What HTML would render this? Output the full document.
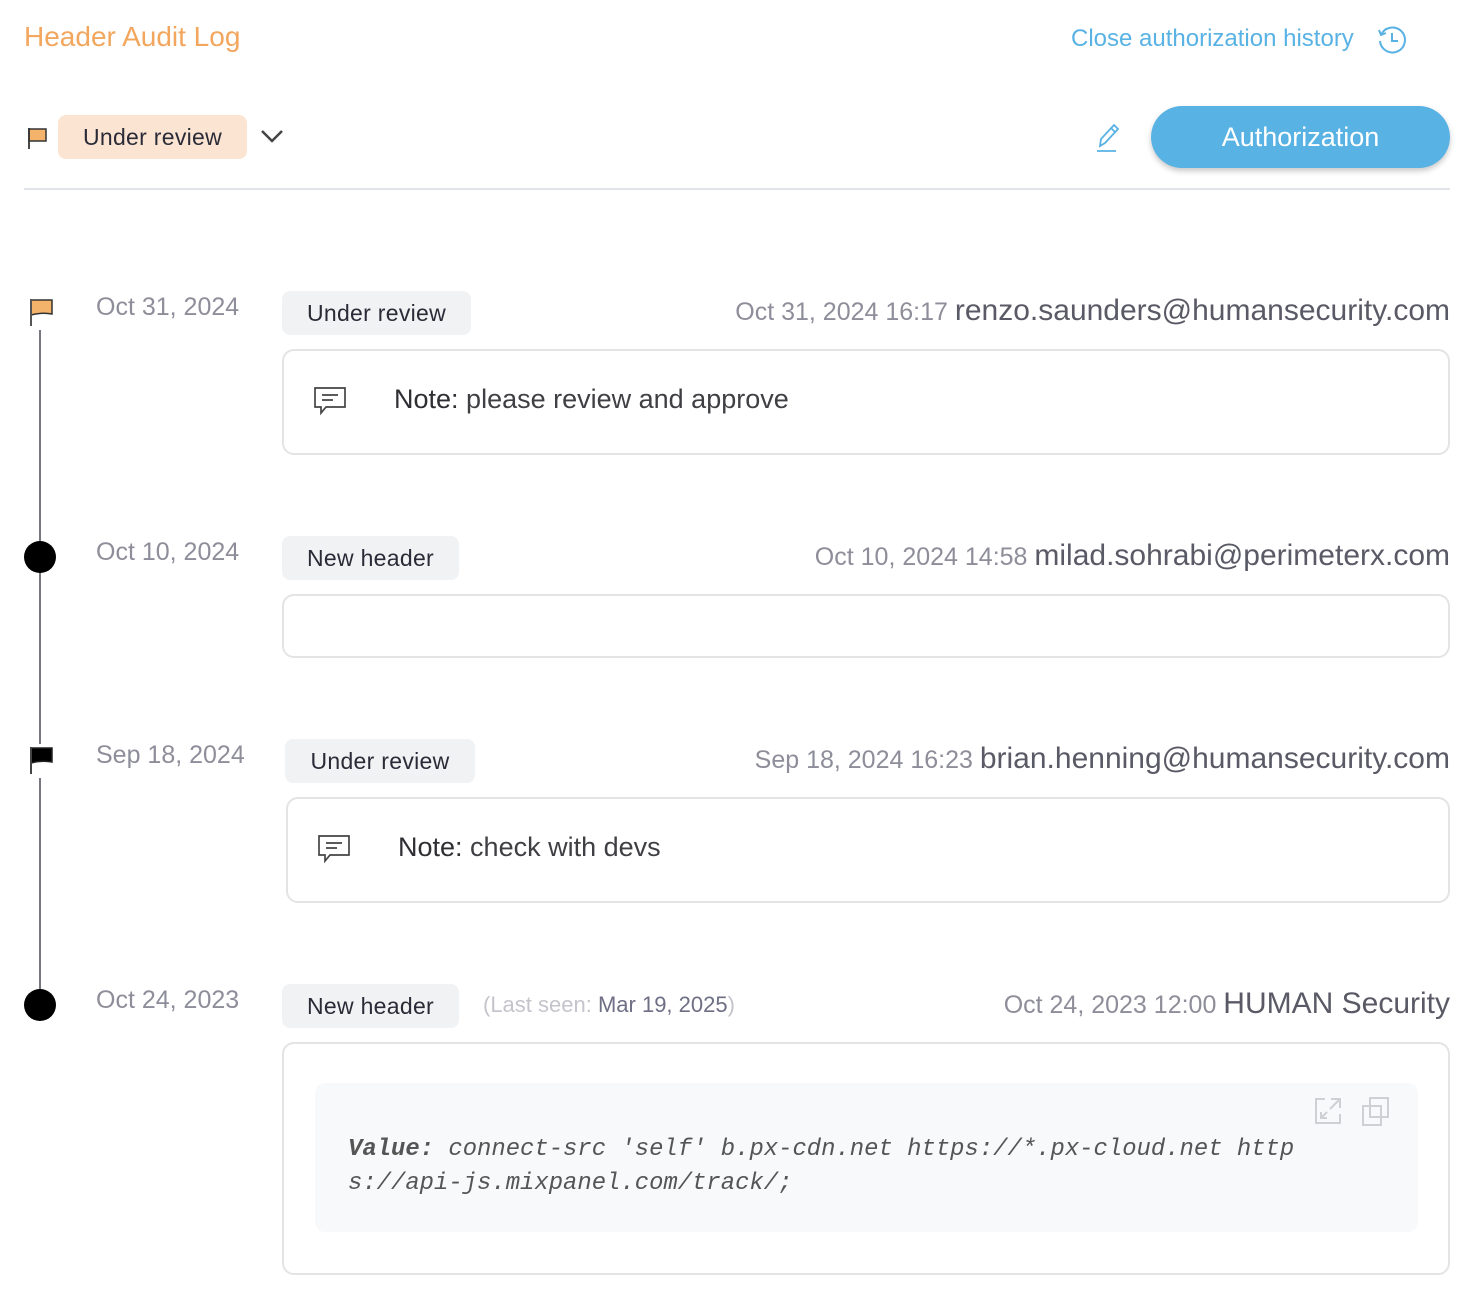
<!DOCTYPE html>
<html><head><meta charset="utf-8"><style>
*{box-sizing:border-box;margin:0;padding:0}
body{width:1480px;height:1294px;background:#fff;font-family:"Liberation Sans",sans-serif;position:relative;overflow:hidden}
.a{position:absolute;white-space:nowrap}
.title{left:24px;top:21px;font-size:28px;color:#f2a65e}
.close{left:1071px;top:25px;font-size:24px;color:#59b2e4}
.tag{position:absolute;background:#f1f2f4;border-radius:8px;font-size:23px;color:#2b2b38;display:flex;align-items:center;justify-content:center;letter-spacing:.3px}
.date{font-size:25px;color:#8e8e9a}
.right{right:30px;font-size:25px;color:#8e8e9a;text-align:right}
.right b{font-weight:normal;color:#5a5a66;font-size:30px}
.card{position:absolute;border:2px solid #e4e4e6;border-radius:12px;background:#fff}
.note{font-size:27px;color:#3f3f44}
.note b{font-weight:normal;color:#2e2e33}
.line{position:absolute;left:39px;width:2px;background:#77777f}
.dot{position:absolute;left:24px;width:32px;height:32px;border-radius:50%;background:#000}
</style></head><body>
<div class="a title">Header Audit Log</div>
<div class="a close">Close authorization history</div>
<svg class="a" style="left:1376px;top:24px" width="32" height="32" viewBox="0 0 32 32" fill="none" stroke="#59b2e4" stroke-width="2"><path d="M5 11 A12.5 12.5 0 1 1 4 17"/><path d="M3 6 L5 11 L10 9"/><path d="M16 9 V17 H22"/></svg>

<svg class="a" style="left:26px;top:125px" width="24" height="26" viewBox="0 0 24 26"><path d="M3 4 H20 V16 H3 Z" fill="#f4b36b" stroke="#333" stroke-width="1.5"/><path d="M3 3 V24" stroke="#333" stroke-width="1.8"/></svg>
<div class="tag" style="left:58px;top:115px;width:189px;height:44px;background:#fbe5d2;">Under review</div>
<svg class="a" style="left:259px;top:126px" width="28" height="20" viewBox="0 0 28 20"><path d="M3 5 L13 15 L23 5" fill="none" stroke="#444" stroke-width="2.5"/></svg>
<svg class="a" style="left:1094px;top:120px" width="28" height="34" viewBox="0 0 28 34" fill="none" stroke="#59b2e4" stroke-width="1.8"><path d="M6 26 L7 19 L20 5 L24 9 L11 23 Z M17 8 L21 12"/><path d="M3 31 H22"/></svg>
<div class="a" style="left:1151px;top:106px;width:299px;height:62px;border-radius:31px;background:#59b2e4;color:#fff;font-size:27px;display:flex;align-items:center;justify-content:center;box-shadow:0 3px 6px rgba(0,0,0,.22)">Authorization</div>
<div class="a" style="left:24px;top:188px;width:1426px;height:2px;background:#e1e5ea"></div>

<div class="line" style="top:328px;height:676px"></div>

<svg class="a" style="left:27px;top:296px;background:#fff" width="28" height="34" viewBox="0 0 28 34"><path d="M4 4 H25 V18 Q15 16 4 19 Z" fill="#f4b36b" stroke="#333" stroke-width="1.5"/><path d="M4 3 V30" stroke="#555" stroke-width="2"/></svg>
<div class="a date" style="left:96px;top:293px">Oct 31, 2024</div>
<div class="tag" style="left:282px;top:291px;width:189px;height:44px">Under review</div>
<div class="a right" style="top:294px">Oct 31, 2024 16:17 <b>renzo.saunders@humansecurity.com</b></div>
<div class="card" style="left:282px;top:349px;width:1168px;height:106px"></div>
<svg class="a" style="left:313px;top:386px" width="34" height="32" viewBox="0 0 34 32" fill="none" stroke="#444" stroke-width="1.7"><path d="M2 2 H32 V21 H13 L8 27 V21 H2 Z"/><path d="M9 9 H25 M9 14 H20"/></svg>
<div class="a note" style="left:394px;top:384px"><b>Note:</b> please review and approve</div>

<div class="dot" style="top:541px"></div>
<div class="a date" style="left:96px;top:538px">Oct 10, 2024</div>
<div class="tag" style="left:282px;top:536px;width:177px;height:44px">New header</div>
<div class="a right" style="top:539px">Oct 10, 2024 14:58 <b>milad.sohrabi@perimeterx.com</b></div>
<div class="card" style="left:282px;top:594px;width:1168px;height:64px"></div>

<svg class="a" style="left:27px;top:744px;background:#fff" width="28" height="34" viewBox="0 0 28 34"><path d="M4 4 H25 V18 Q15 16 4 19 Z" fill="#000" stroke="#222" stroke-width="1.5"/><path d="M4 3 V30" stroke="#444" stroke-width="2"/></svg>
<div class="a date" style="left:96px;top:741px">Sep 18, 2024</div>
<div class="tag" style="left:285px;top:739px;width:190px;height:44px">Under review</div>
<div class="a right" style="top:742px">Sep 18, 2024 16:23 <b>brian.henning@humansecurity.com</b></div>
<div class="card" style="left:286px;top:797px;width:1164px;height:106px"></div>
<svg class="a" style="left:317px;top:834px" width="34" height="32" viewBox="0 0 34 32" fill="none" stroke="#444" stroke-width="1.7"><path d="M2 2 H32 V21 H13 L8 27 V21 H2 Z"/><path d="M9 9 H25 M9 14 H20"/></svg>
<div class="a note" style="left:398px;top:832px"><b>Note:</b> check with devs</div>

<div class="dot" style="top:989px"></div>
<div class="a date" style="left:96px;top:986px">Oct 24, 2023</div>
<div class="tag" style="left:282px;top:984px;width:177px;height:44px">New header</div>
<div class="a" style="left:483px;top:992px;font-size:22px;color:#c4c4cc">(Last seen: <span style="color:#6e6e85">Mar 19, 2025</span>)</div>
<div class="a right" style="top:987px">Oct 24, 2023 12:00 <b>HUMAN Security</b></div>
<div class="card" style="left:282px;top:1042px;width:1168px;height:233px"></div>
<div class="a" style="left:315px;top:1083px;width:1103px;height:149px;background:#f8f9fb;border-radius:10px"></div>
<svg class="a" style="left:1313px;top:1096px" width="30" height="30" viewBox="0 0 30 30" fill="none" stroke="#d0d0d4" stroke-width="2"><path d="M12 3 H3 V27 H27 V18"/><path d="M18 3 H27 V12 M27 3 L17 13 M8 22 L14 16 M8 16 V22 H14"/></svg>
<svg class="a" style="left:1361px;top:1096px" width="30" height="32" viewBox="0 0 30 32" fill="none" stroke="#d0d0d4" stroke-width="2"><rect x="9" y="2" width="18" height="19"/><rect x="2" y="10" width="18" height="19"/></svg>
<div class="a" style="left:348px;top:1133px;font-family:'Liberation Mono',monospace;font-style:italic;font-size:23.9px;line-height:34px;color:#555;white-space:pre"><b style="color:#555">Value:</b> connect-src 'self' b.px-cdn.net https://*.px-cloud.net http
s://api-js.mixpanel.com/track/;</div>
</body></html>
